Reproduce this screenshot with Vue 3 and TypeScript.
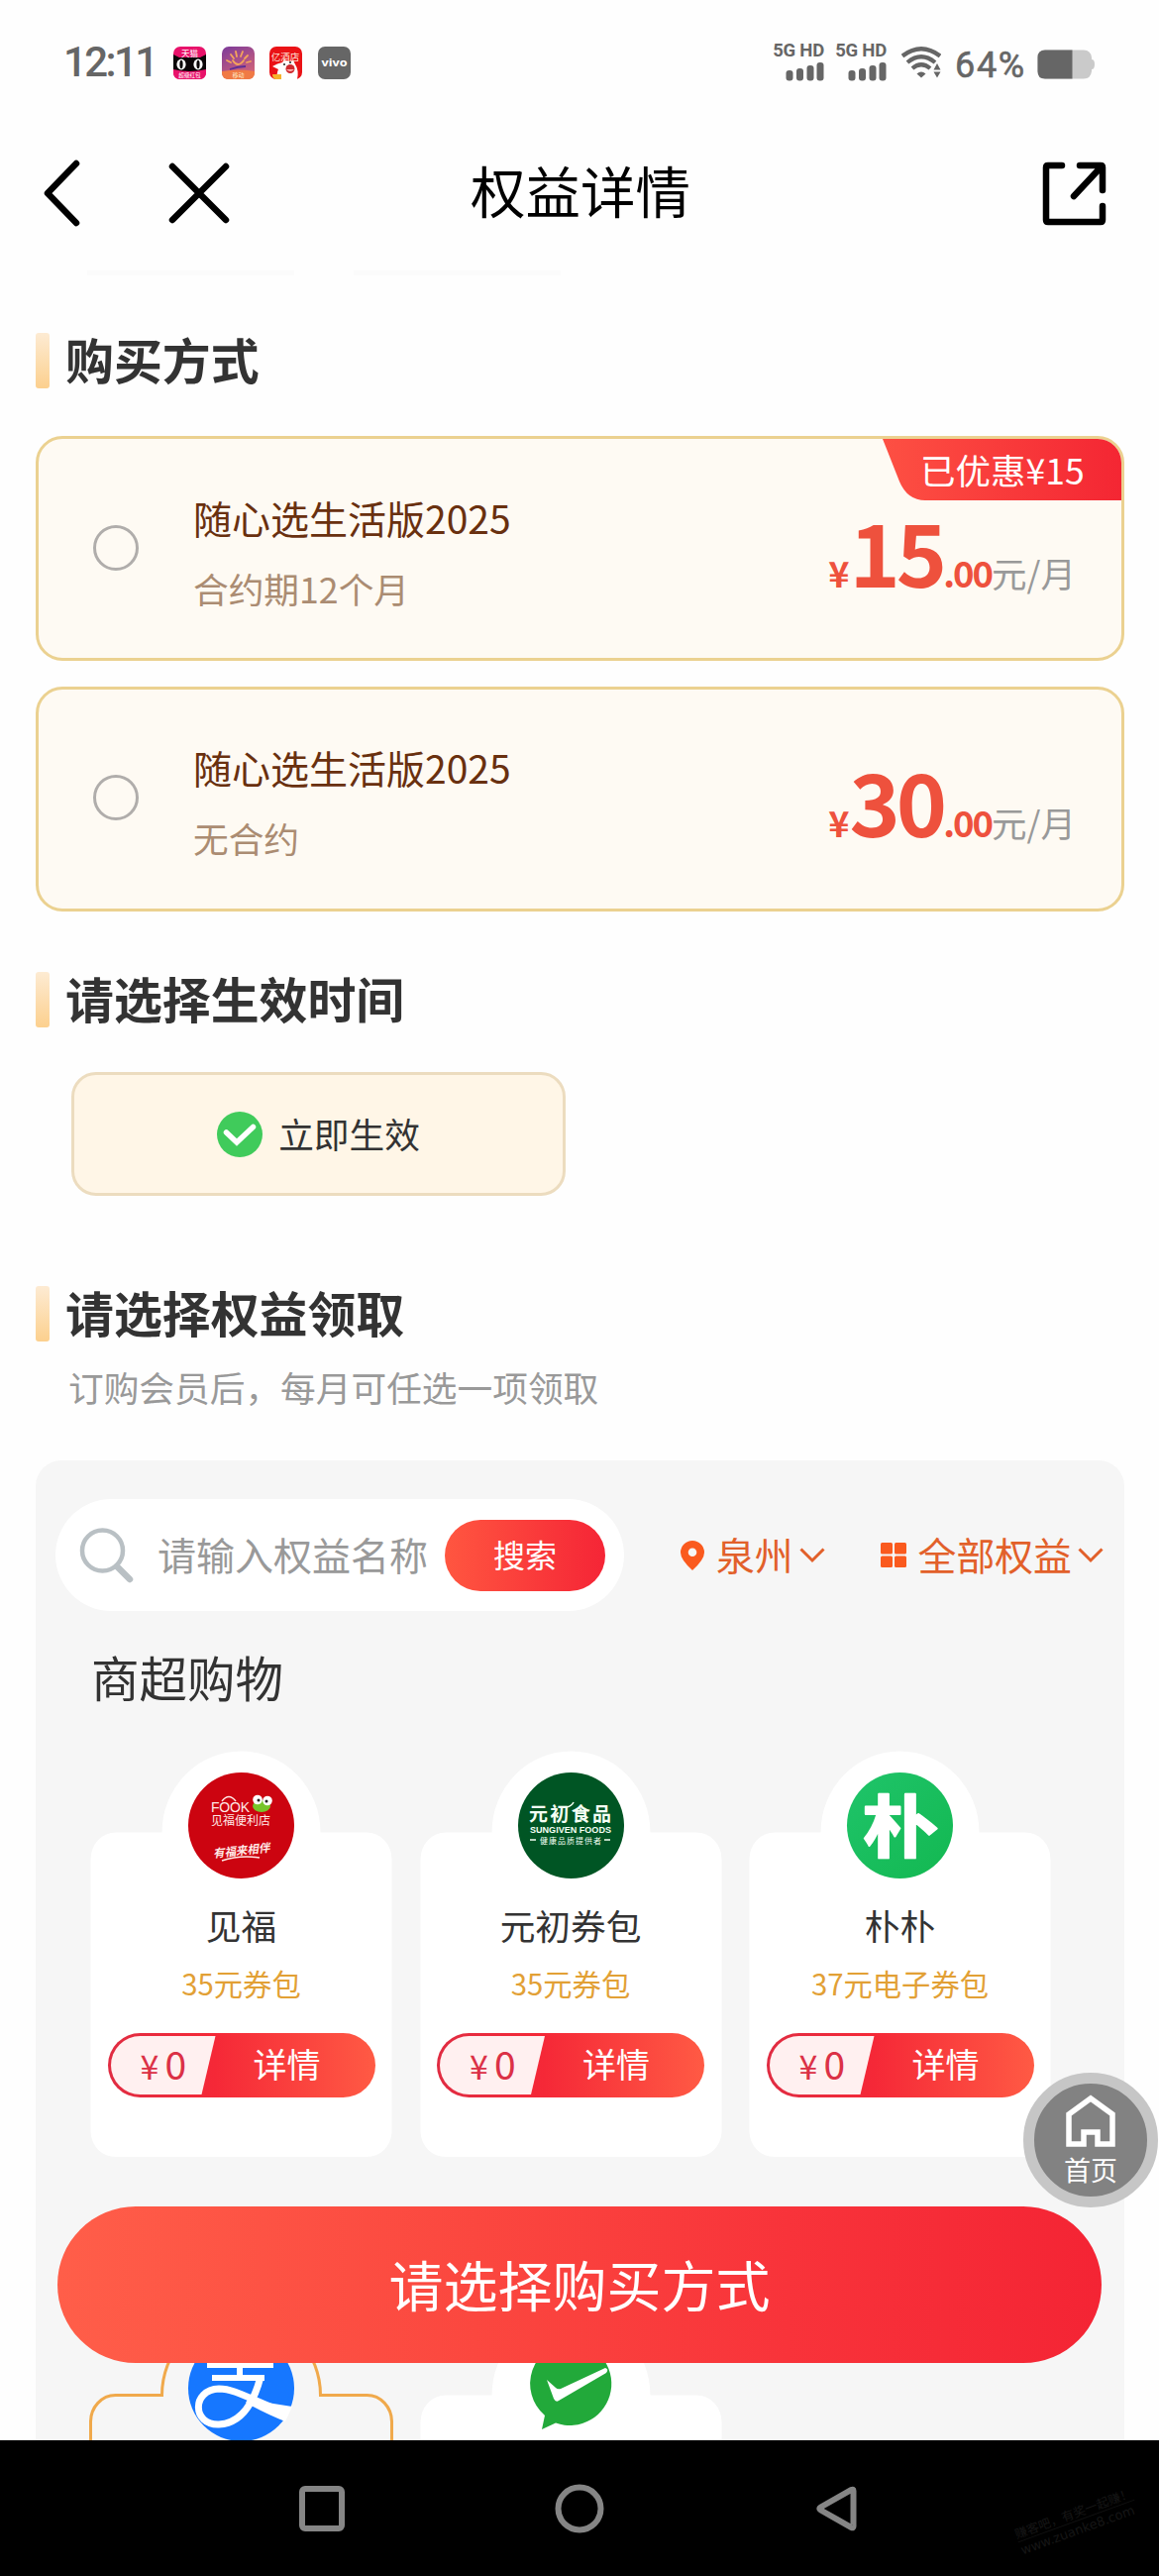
<script setup lang="ts">
interface Plan {
  name: string
  term: string
  price: string
  badge?: string
}
interface Benefit {
  logo: 'fook' | 'sungiven' | 'pupu'
  name: string
  desc: string
}

const plans: Plan[] = [
  { name: '随心选生活版2025', term: '合约期12个月', price: '15', badge: '已优惠¥15' },
  { name: '随心选生活版2025', term: '无合约', price: '30' },
]

const benefits: Benefit[] = [
  { logo: 'fook', name: '见福', desc: '35元券包' },
  { logo: 'sungiven', name: '元初券包', desc: '35元券包' },
  { logo: 'pupu', name: '朴朴', desc: '37元电子券包' },
]

const cardShape =
  'M27 84.5H73.5A80 82 0 0 1 233.5 84.5H280A25 27 0 0 1 305.5 112V387A25 26 0 0 1 280 412H27A25 26 0 0 1 1.5 387V112A25 27 0 0 1 27 84.5Z'
</script>

<template>
  <div class="phone">
    <header class="status">
      <span class="clock">12:11</span>
      <div class="apps">
        <svg class="app" viewBox="0 0 33 33">
          <rect width="33" height="33" rx="7" fill="#e8126a" />
          <path d="M0 8l6 3h21l6-3v17H0z" fill="#0b0608" />
          <text x="16.5" y="10" text-anchor="middle" font-size="8.5" fill="#fff">天猫</text>
          <ellipse cx="8" cy="18" rx="4.6" ry="5.4" fill="#fff" />
          <ellipse cx="25" cy="18" rx="4.6" ry="5.4" fill="#fff" />
          <ellipse cx="8" cy="18" rx="1.6" ry="4.2" fill="#0b0608" />
          <ellipse cx="25" cy="18" rx="1.6" ry="4.2" fill="#0b0608" />
          <path d="M0 23q16 4 33 0v4a6 6 0 0 1-6 6H6a6 6 0 0 1-6-6z" fill="#e8126a" />
          <text x="16.5" y="31" text-anchor="middle" font-size="5.6" fill="#fff">超级红包</text>
        </svg>
        <svg class="app" viewBox="0 0 33 33">
          <defs>
            <linearGradient id="dusk" x1="0" y1="0" x2="0.5" y2="1">
              <stop offset="0" stop-color="#7b3a9a" />
              <stop offset="1" stop-color="#d0637a" />
            </linearGradient>
          </defs>
          <rect width="33" height="33" rx="7" fill="url(#dusk)" />
          <path d="M11 14q5 8 11 0M12 12l-3-4M15 10l-1-5M19 10l2-5M23 12l3-3M25 16l4-1M9 16l-4-2" fill="none" stroke="#f5a55a" stroke-width="1.8" stroke-linecap="round" />
          <path d="M8 23q8-3 16-3" fill="none" stroke="#5c2f96" stroke-width="1.8" />
          <path d="M0 25q16-3 33 0v2a6 6 0 0 1-6 6H6a6 6 0 0 1-6-6z" fill="#f07a45" />
          <text x="16.5" y="31" text-anchor="middle" font-size="6" fill="#ffe9c4">移动</text>
        </svg>
        <svg class="app" viewBox="0 0 33 33">
          <rect width="33" height="33" rx="7" fill="#ea1216" />
          <path d="M3 20q5-3 10-4l2-3 4 2 5-1 2 4q4 6 2 15H8q-1-6 1-10z" fill="#fff" />
          <text x="16" y="13.500" text-anchor="middle" font-size="9.500" fill="#ffe3d8">亿酒店</text>
          <circle cx="21" cy="22.500" r="4.500" fill="#cf2a2f" />
          <path d="M17 23q4 4 8 0z" fill="#ffb3b0" />
          <path d="M14 18h2m4-2h2" stroke="#222" stroke-width="1.4" />
          <path d="M3 28h9v5H6q-3-1-3-5z" fill="#f6b32c" />
        </svg>
        <svg class="app" viewBox="0 0 33 33">
          <rect width="33" height="33" rx="7" fill="#666" />
          <text x="3.500" y="20" textLength="26" lengthAdjust="spacingAndGlyphs" class="vivo">vivo</text>
        </svg>
      </div>
      <div class="radios">
        <div v-for="n in 2" :key="n" class="sim">
          <span class="net">5G&nbsp;HD</span>
          <svg width="39" height="19" viewBox="0 0 39 19" fill="#666">
            <rect x="0.5" y="8" width="7" height="10.5" rx="3" />
            <rect x="11" y="6" width="7" height="12.500" rx="3" />
            <rect x="21.500" y="3" width="7" height="15.500" rx="3" />
            <rect x="31.500" y="0" width="7" height="18.500" rx="3" />
          </svg>
        </div>
      </div>
      <svg class="wifi" width="40" height="32" viewBox="0 0 40 32" fill="none" stroke="#666" stroke-width="4.200">
        <path d="M1 9.500Q20-5 39 9.500" />
        <path d="M6 16Q20 4.500 34 16" />
        <path d="M11 22Q20 14.500 29 22" />
        <path d="M15.500 27.500Q20 23.500 24.500 27.500L20 31.500z" fill="#666" stroke="none" />
        <path d="M32.500 23.500L36 17l3.500 6.500zM32.500 25.500h7L36 31.500z" fill="#666" stroke="none" />
      </svg>
      <span class="percent">64%</span>
      <svg class="battery" width="59" height="30" viewBox="0 0 59 30">
        <path d="M8 .5H47Q54 .5 55 8v2q3 0 3 5t-3 5v2q-1 7.500-8 7.500H8Q.5 29.500.5 22V8Q.5.500 8 .5z" fill="#cacaca" />
        <path d="M35.500.500H8Q.5.500.5 8v14q0 7.500 7.500 7.500h27.500z" fill="#666" />
      </svg>
    </header>

    <nav class="bar">
      <svg class="back" width="38" height="68" viewBox="0 0 38 68"><path d="M34 4L5 34L34 64" /></svg>
      <svg class="close" width="62" height="62" viewBox="0 0 62 62"><path d="M4 4L58 58M58 4L4 58" /></svg>
      <h1>权益详情</h1>
      <svg class="share" width="65" height="65" viewBox="0 0 65 65">
        <path d="M20 4H6Q4 4 4 6V59Q4 61 6 61H59Q61 61 61 59V45M38 4H59Q61 4 61 6V29M60 5L32 35" />
      </svg>
    </nav>

    <main class="content">
      <div class="edges"><i></i><i></i></div>

      <h2 class="heading first"><i></i>购买方式</h2>
      <section class="plans">
        <article v-for="plan in plans" :key="plan.price" class="plan">
          <span class="radio"></span>
          <div class="info">
            <div class="plan-name">{{ plan.name }}</div>
            <div class="plan-term">{{ plan.term }}</div>
          </div>
          <div class="price">
            <span class="yen">¥</span><span class="big">{{ plan.price }}</span><span class="cents">.00</span><span class="unit">元/月</span>
          </div>
          <div v-if="plan.badge" class="badge">
            <svg viewBox="0 0 241 62" width="241" height="62">
              <defs>
                <linearGradient id="badge" x1="0" y1="0" x2="1" y2="0">
                  <stop offset="0" stop-color="#fd5043" />
                  <stop offset="1" stop-color="#f42633" />
                </linearGradient>
              </defs>
              <path d="M0 0H217A24 24 0 0 1 241 24V62H43Q25 62 17 43Z" fill="url(#badge)" />
            </svg>
            <span>{{ plan.badge }}</span>
          </div>
        </article>
      </section>

      <h2 class="heading second"><i></i>请选择生效时间</h2>
      <div class="option">
        <svg width="46" height="46" viewBox="0 0 46 46">
          <circle cx="23" cy="23" r="23" fill="#40cb5b" />
          <path d="M9.500 21L20 31L36.500 15.500" fill="none" stroke="#fff" stroke-width="5.500" stroke-linecap="round" />
        </svg>
        <span>立即生效</span>
      </div>

      <h2 class="heading third"><i></i>请选择权益领取</h2>
      <p class="hint">订购会员后，每月可任选一项领取</p>

      <section class="panel">
        <div class="filters">
          <div class="search">
            <svg width="56" height="56" viewBox="0 0 56 56" fill="none" stroke="#b9c0c4">
              <circle cx="23.500" cy="23" r="20.500" stroke-width="4.500" />
              <path d="M38 39L51 52" stroke-width="6.500" stroke-linecap="round" />
            </svg>
            <span class="placeholder">请输入权益名称</span>
            <span class="go">搜索</span>
          </div>
          <div class="filter city">
            <svg width="24" height="30" viewBox="0 0 24 30">
              <path fill-rule="evenodd" d="M12 0A12 12 0 0 1 24 12Q24 19 12 30Q0 19 0 12A12 12 0 0 1 12 0zM12 7.500A4.300 4.300 0 1 0 12 16.100A4.300 4.300 0 1 0 12 7.500z" fill="#fa5a1e" />
            </svg>
            <span>泉州</span>
            <svg width="26" height="16" viewBox="0 0 26 16"><path class="down" d="M1.500 1.500L13 13L24.500 1.500" /></svg>
          </div>
          <div class="filter kind">
            <svg width="26" height="25" viewBox="0 0 26 25" fill="#fa5a1e">
              <rect width="12" height="11.500" rx="1.500" /><rect x="14" width="12" height="11.500" rx="1.500" />
              <rect y="13.500" width="12" height="11.500" rx="1.500" /><rect x="14" y="13.500" width="12" height="11.500" rx="1.500" />
            </svg>
            <span>全部权益</span>
            <svg width="26" height="16" viewBox="0 0 26 16"><path class="down" d="M1.500 1.500L13 13L24.500 1.500" /></svg>
          </div>
        </div>

        <h3>商超购物</h3>

        <div class="grid">
          <article v-for="item in benefits" :key="item.name" class="benefit">
            <svg class="shape" viewBox="0 0 307 413"><path :d="cardShape" fill="#fff" /></svg>
            <svg class="logo" viewBox="0 0 107 107">
              <g v-if="item.logo === 'fook'">
                <circle cx="53.500" cy="53.500" r="53.500" fill="#cc0410" />
                <g fill="#ffe9e6">
                  <text x="23" y="40" class="latin" font-size="14" textLength="39">FOOK</text>
                  <text x="23" y="53" font-size="12" textLength="60">见福便利店</text>
                  <text x="25" y="83" font-size="11.500" font-weight="700" font-style="italic" transform="rotate(-6 53 80)">有福来相伴</text>
                </g>
                <path d="M34 29Q41 20 48 29M34 89Q52 83 72 86" fill="none" stroke="#ffe9e6" stroke-width="1.500" />
                <ellipse cx="74" cy="34" rx="9" ry="6" fill="#77c52a" />
                <circle cx="70" cy="27.500" r="4.800" fill="#fff" /><circle cx="80" cy="28.500" r="4.800" fill="#fff" />
                <circle cx="71" cy="28" r="1.500" fill="#222" /><circle cx="79" cy="29" r="1.500" fill="#222" />
              </g>
              <g v-else-if="item.logo === 'sungiven'">
                <circle cx="53.500" cy="53.500" r="53.500" fill="#005524" />
                <g fill="#f4fff4">
                  <text x="11" y="49" font-size="19" font-weight="700" textLength="83">元初食品</text>
                  <text x="12" y="60.500" class="latin" font-size="9.500" font-weight="700" textLength="82" lengthAdjust="spacingAndGlyphs">SUNGIVEN FOODS</text>
                  <text x="22" y="71.500" font-size="8" textLength="62">健康品质提供者</text>
                </g>
                <path d="M12 68h6M87 68h6M49 35q5-1 7-5" stroke="#f4fff4" stroke-width="1.600" fill="none" />
              </g>
              <g v-else>
                <defs>
                  <linearGradient id="pupu" x1="0" y1="0" x2="1" y2="1">
                    <stop offset="0" stop-color="#1fc46a" />
                    <stop offset="1" stop-color="#13b851" />
                  </linearGradient>
                </defs>
                <circle cx="53.500" cy="53.500" r="53.500" fill="url(#pupu)" />
                <text x="54" y="0" text-anchor="middle" class="pupu" transform="translate(0 80) scale(1 0.88)">朴</text>
              </g>
            </svg>
            <div class="name">{{ item.name }}</div>
            <div class="desc">{{ item.desc }}</div>
            <div class="buy">
              <span class="cost"><small>¥</small>0</span>
              <span class="detail">详情</span>
            </div>
          </article>
        </div>

        <div class="grid next">
          <article class="benefit">
            <svg class="shape" viewBox="0 0 307 413"><path :d="cardShape" fill="#f6f6f6" stroke="#f0a94b" stroke-width="3" /></svg>
            <svg class="logo" viewBox="0 0 107 107">
              <circle cx="53.500" cy="53.500" r="53.500" fill="#1677ff" />
              <path d="M19 30H86M52 12V42M24 43H77" fill="none" stroke="#fff" stroke-width="6" />
              <path d="M73 42C67 65 55 89 31 90C4 91 3 55 31 54C49 54 68 68 101 79" fill="none" stroke="#fff" stroke-width="7" />
              <path d="M60 65L105 72L98 87Q80 80 58 68z" fill="#fff" />
            </svg>
          </article>
          <article class="benefit">
            <svg class="shape" viewBox="0 0 307 413"><path :d="cardShape" fill="#fff" /></svg>
            <svg class="logo" viewBox="0 0 107 107">
              <path d="M52.500 7A42 42 0 1 1 38 88.500L24 95L27 81A42 42 0 0 1 52.500 7z" fill="#22a93a" />
              <path d="M29 45L38 53Q40 55 43 54L88 33Q92 34 89 38L41 66Q38 68 36 64z" fill="#fff" />
            </svg>
          </article>
        </div>
      </section>
    </main>

    <button class="cta">请选择购买方式</button>

    <div class="home">
      <svg width="52" height="54" viewBox="0 0 52 54">
        <path d="M4 20L26 4L48 20V50H33V38H19V50H4Z" fill="none" stroke="#fff" stroke-width="5.500" />
      </svg>
      <span>首页</span>
    </div>

    <footer class="keys">
      <svg width="46" height="46" viewBox="0 0 46 46"><rect x="3" y="3" width="40" height="40" rx="3" /></svg>
      <svg width="50" height="50" viewBox="0 0 50 50"><circle cx="25" cy="25" r="21.500" /></svg>
      <svg width="42" height="46" viewBox="0 0 42 46"><path d="M37.500 5Q37.500 3 35.500 4L4.500 21.500Q2 23 4.500 24.500L35.500 42Q37.500 43 37.500 41Z" /></svg>
      <div class="mark"><span>赚客吧，有奖一起赚！</span><span class="url">www.zuanke8.com</span></div>
    </footer>
  </div>
</template>

<style>
body {
  background: #fefefe;
}
</style>

<style scoped>
.phone {
  position: relative;
  display: flex;
  flex-direction: column;
  width: 1170px;
  height: 2600px;
  overflow: hidden;
  background: #fefefe;
  color: #333;
  font-family: 'Noto Sans CJK SC', 'Noto Sans', sans-serif;
}
svg {
  display: block;
  flex: none;
}
h1,
h2,
h3,
p {
  margin: 0;
}

.status {
  display: flex;
  align-items: center;
  flex: none;
  height: 126px;
  padding-left: 64px;
  color: #666;
}
.clock {
  width: 111px;
  font: 500 42px/50px Roboto, sans-serif;
  letter-spacing: -2.6px;
  white-space: nowrap;
}
.apps {
  display: flex;
  gap: 15.700px;
}
.app {
  width: 33px;
  height: 33px;
}
.vivo {
  font: 700 11px 'Noto Sans', sans-serif;
  fill: #fff;
}
.radios {
  display: flex;
  gap: 10px;
  margin-left: 425px;
}
.sim {
  display: flex;
  flex-direction: column;
  align-items: flex-end;
  gap: 4px;
  width: 53px;
}
.net {
  font: 700 18.500px/15px Roboto, sans-serif;
  letter-spacing: -0.2px;
  white-space: nowrap;
}
.wifi {
  margin-left: 15px;
}
.percent {
  width: 83px;
  margin-left: 14px;
  padding-top: 5px;
  box-sizing: border-box;
  font: 400 36px/40px Roboto, sans-serif;
  letter-spacing: 1.600px;
  white-space: nowrap;
  -webkit-text-stroke: 0.600px #666;
}
.battery {
  margin-top: 3px;
}

.bar {
  display: flex;
  align-items: center;
  flex: none;
  height: 138px;
  padding: 0 53px 0 43px;
}
.bar svg {
  fill: none;
  stroke: #000;
  stroke-width: 6.500;
  stroke-linecap: round;
  stroke-linejoin: round;
}
.close {
  margin-left: 89px;
}
h1 {
  flex: 1;
  margin: 0 0 8px 243px;
  color: #000;
  font-size: 55.500px;
  font-weight: 400;
  line-height: 70px;
}

.content {
  flex: 1;
  min-height: 0;
  overflow: hidden;
  padding: 0 35px 0 36px;
}
.edges {
  display: flex;
  gap: 60px;
  height: 5px;
  margin: 9px 0 0 52px;
}
.edges i {
  width: 209px;
  background: #fbfbfb;
}
.heading {
  display: flex;
  gap: 16px;
  height: 56px;
  font-size: 48.900px;
  font-weight: 700;
  line-height: 52px;
}
.heading i {
  width: 14px;
  height: 56px;
  border-radius: 3px;
  background: linear-gradient(#fdebd3, #fcd08e);
}
.first {
  margin-top: 58px;
}
.plans {
  display: flex;
  flex-direction: column;
  gap: 25.500px;
  margin-top: 48px;
}
.plan {
  position: relative;
  display: flex;
  align-items: center;
  box-sizing: border-box;
  height: 227px;
  padding: 0 46px 0 55px;
  border: 3px solid #ebd190;
  border-radius: 27px;
  background: #fefaf3;
}
.radio {
  box-sizing: border-box;
  width: 46px;
  height: 46px;
  margin-bottom: 2px;
  border: 3px solid #b0adab;
  border-radius: 50%;
}
.info {
  flex: 1;
  margin-left: 55px;
  padding-top: 8px;
}
.plan-name {
  color: #69300f;
  font-size: 39px;
  line-height: 60px;
}
.plan-term {
  margin-top: 12px;
  color: #ab8c72;
  font-size: 35.700px;
  line-height: 60px;
}
.price {
  display: flex;
  align-items: baseline;
  padding-top: 25px;
  color: #ee513d;
  font-weight: 700;
  line-height: 90px;
}
.yen {
  font-size: 36px;
}
.big {
  font-size: 87px;
  letter-spacing: -4px;
}
.cents {
  font-size: 36.500px;
  letter-spacing: -2px;
}
.unit {
  color: #999;
  font-size: 35.500px;
  font-weight: 400;
}
.badge {
  position: absolute;
  top: 0;
  right: 0;
  display: flex;
  width: 241px;
}
.badge span {
  position: absolute;
  top: 0;
  left: 38px;
  color: #fff;
  font-size: 35.500px;
  line-height: 62px;
}

.second {
  margin-top: 61.500px;
}
.option {
  display: flex;
  align-items: center;
  justify-content: center;
  gap: 16px;
  box-sizing: border-box;
  width: 499px;
  height: 125px;
  margin: 45px 0 0 36px;
  border: 3px solid #ecdcbf;
  border-radius: 25px;
  background: #fff6e7;
  font-size: 35.700px;
}
.option span {
  margin-bottom: 2px;
}
.third {
  margin-top: 91px;
}
.hint {
  margin: 21px 0 0 33px;
  color: #999;
  font-size: 35.700px;
  line-height: 50px;
}

.panel {
  height: 1200px;
  margin-top: 49px;
  padding: 39px 0 0 20px;
  border-radius: 26px;
  background: #f6f6f6;
}
.filters {
  display: flex;
  align-items: center;
  height: 113px;
}
.search {
  display: flex;
  align-items: center;
  box-sizing: border-box;
  width: 574px;
  height: 113px;
  padding-left: 24px;
  border-radius: 57px;
  background: #fff;
}
.placeholder {
  margin: 0 0 3px 23px;
  color: #999;
  font-size: 39px;
}
.go {
  width: 162px;
  height: 72px;
  margin-left: 17px;
  border-radius: 36px;
  background: linear-gradient(90deg, #ff5640, #f52536);
  color: #fff;
  font-size: 32px;
  line-height: 69px;
  text-align: center;
}
.filter {
  display: flex;
  align-items: center;
  color: #e2602a;
  font-size: 38.800px;
  white-space: nowrap;
}
.filter span {
  margin: 0 6px 3px 12px;
}
.city {
  margin-left: 57px;
}
.kind {
  margin-left: 56px;
}
.down {
  fill: none;
  stroke: #e2602a;
  stroke-width: 3;
}
h3 {
  margin: 36px 0 0 36px;
  font-size: 48.500px;
  font-weight: 400;
  line-height: 60px;
}
.grid {
  display: flex;
  gap: 25.500px;
  margin: 126px 0 0 34px;
}
.next {
  margin-top: 238px;
}
.benefit {
  position: relative;
  display: flex;
  flex-direction: column;
  align-items: center;
  width: 307px;
  height: 330px;
}
.shape {
  position: absolute;
  top: -83px;
  left: 0;
  width: 307px;
  height: 413px;
}
.logo {
  position: relative;
  width: 107px;
  height: 107px;
  margin-top: -59px;
  overflow: visible;
}
.latin {
  font-family: 'Liberation Sans', sans-serif;
}
.pupu {
  font-size: 77px;
  font-weight: 700;
  fill: #fff;
  stroke: #fff;
  stroke-width: 2;
  stroke-linejoin: round;
}
.name {
  position: relative;
  margin-top: 22px;
  font-size: 35.700px;
  line-height: 50px;
}
.desc {
  position: relative;
  margin-top: 13px;
  color: #e2a035;
  font-size: 29.300px;
  line-height: 40px;
}
.buy {
  position: relative;
  display: flex;
  box-sizing: border-box;
  width: 270px;
  height: 65px;
  margin-top: 31px;
  padding: 3px;
  border-radius: 33px;
  background: linear-gradient(90deg, #e02c42, #f52837 40%, #ff5a44);
  color: #fff;
  line-height: 56px;
}
.cost {
  display: flex;
  align-items: baseline;
  box-sizing: border-box;
  width: 106px;
  height: 59px;
  padding-left: 30px;
  gap: 6px;
  border-radius: 30px 0 0 30px;
  background: #fff0f0;
  clip-path: polygon(0 0, 100% 0, 92px 100%, 0 100%);
  color: #db3146;
  font-size: 39px;
  line-height: 54px;
}
.cost small {
  font-size: 34px;
}
.detail {
  margin-left: 38px;
  font-size: 34px;
}

.cta {
  position: absolute;
  top: 2227px;
  left: 58px;
  width: 1054px;
  height: 158px;
  padding: 0 0 5px;
  border: 0;
  border-radius: 79px;
  background: linear-gradient(90deg, #ff5e49, #fb473f 40%, #f8333a 70%, #f42434);
  color: #fff;
  font: 400 55px 'Noto Sans CJK SC', sans-serif;
}
.home {
  position: absolute;
  top: 2092px;
  left: 1033px;
  display: flex;
  flex-direction: column;
  align-items: center;
  gap: 2px;
  box-sizing: border-box;
  width: 136px;
  height: 136px;
  padding-top: 11px;
  border: 11px solid #c6c6c6;
  border-radius: 50%;
  background: #828282;
  color: #fff;
  font-size: 27px;
  line-height: 40px;
}

.keys {
  position: relative;
  display: flex;
  align-items: center;
  flex: none;
  box-sizing: border-box;
  height: 137px;
  padding-left: 302px;
  background: #000;
}
.keys svg {
  fill: none;
  stroke: #858585;
  stroke-width: 6;
}
.keys svg + svg {
  margin-left: 212px;
}
.keys svg + svg + svg {
  margin-left: 214px;
}
.mark {
  display: flex;
  flex-direction: column;
  margin: 26px 0 0 158px;
  color: #161616;
  font-size: 12.500px;
  line-height: 17px;
  white-space: nowrap;
  transform: rotate(-20deg);
}
.url {
  border-top: 1px solid #111;
  font-family: 'DejaVu Sans', sans-serif;
  font-size: 13px;
}
</style>
